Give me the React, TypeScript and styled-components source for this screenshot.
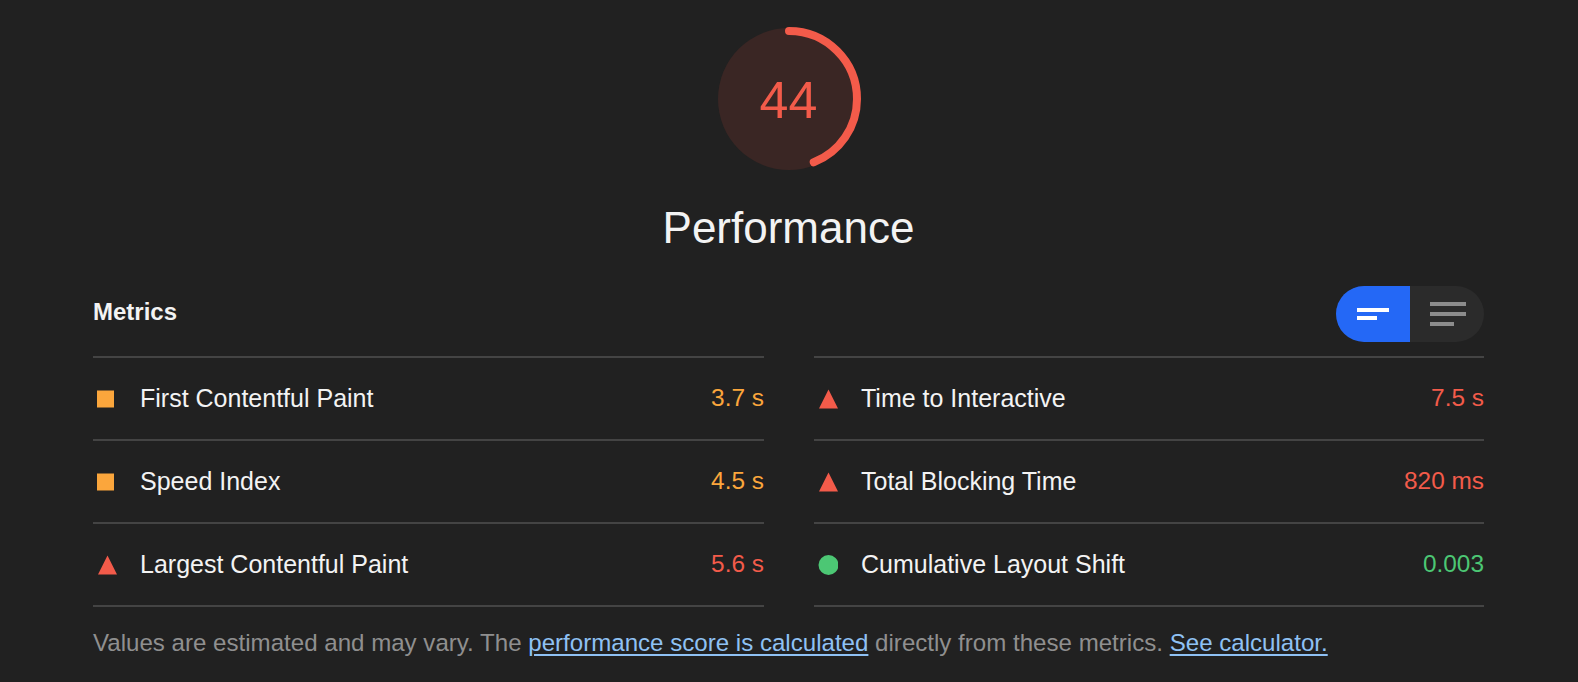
import React, { useState } from 'react';
import styled, { createGlobalStyle } from 'styled-components';

type Rating = 'pass' | 'average' | 'fail';

interface Metric {
  title: string;
  value: string;
  rating: Rating;
}

const colors: Record<Rating, string> = {
  pass: '#4cc774',
  average: '#fba63c',
  fail: '#f35b4a',
};

const leftMetrics: Metric[] = [
  { title: 'First Contentful Paint', value: '3.7 s', rating: 'average' },
  { title: 'Speed Index', value: '4.5 s', rating: 'average' },
  { title: 'Largest Contentful Paint', value: '5.6 s', rating: 'fail' },
];

const rightMetrics: Metric[] = [
  { title: 'Time to Interactive', value: '7.5 s', rating: 'fail' },
  { title: 'Total Blocking Time', value: '820 ms', rating: 'fail' },
  { title: 'Cumulative Layout Shift', value: '0.003', rating: 'pass' },
];

const GlobalStyle = createGlobalStyle`
  html, body {
    margin: 0;
    padding: 0;
    background: #212121;
  }
  body {
    font-family: "Liberation Sans", Arial, Helvetica, sans-serif;
    color: #f3f3f3;
  }
`;

const Page = styled.div`
  width: 1391px;
  margin-left: 93px;
  padding-top: 25px;
  box-sizing: border-box;
`;

const GaugeWrap = styled.div`
  display: flex;
  flex-direction: column;
  align-items: center;
`;

const GaugeBox = styled.div`
  position: relative;
  width: 148px;
  height: 148px;
`;

const GaugeScore = styled.div`
  position: absolute;
  inset: 0;
  display: flex;
  align-items: center;
  justify-content: center;
  font-size: 52px;
  color: #f35b4a;
  padding-top: 2px;
`;

const GaugeLabel = styled.div`
  margin-top: 29px;
  font-size: 44px;
  line-height: 52px;
  color: #f3f3f3;
`;

const Header = styled.div`
  display: flex;
  align-items: center;
  justify-content: space-between;
  margin-top: 32px;
  height: 56px;
  margin-bottom: 14px;
`;

const HeaderTitle = styled.h2`
  margin: 0;
  font-size: 24px;
  font-weight: bold;
  color: #f3f3f3;
  padding-bottom: 4px;
`;

const Toggle = styled.div`
  display: flex;
  width: 148px;
  height: 56px;
  border-radius: 28px;
  overflow: hidden;
  background: #2b2b2b;
`;

const ToggleButton = styled.button<{ $active: boolean }>`
  flex: 1;
  border: none;
  padding: 0;
  margin: 0;
  display: flex;
  align-items: center;
  justify-content: center;
  cursor: pointer;
  background: ${(p) => (p.$active ? '#2468f6' : 'transparent')};
`;

const Grid = styled.div`
  display: grid;
  grid-template-columns: 671px 670px;
  column-gap: 50px;
`;

const Column = styled.div`
  display: flex;
  flex-direction: column;
  border-bottom: 2px solid #444444;
`;

const Row = styled.div`
  display: flex;
  align-items: center;
  height: 81px;
  border-top: 2px solid #444444;
`;

const IconCell = styled.div`
  width: 47px;
  display: flex;
  align-items: center;
  padding-left: 3px;
  box-sizing: border-box;
`;

const Title = styled.div`
  flex: 1;
  font-size: 25px;
  color: #f3f3f3;
  padding-bottom: 1px;
`;

const Value = styled.div<{ $rating: Rating }>`
  font-size: 24.4px;
  color: ${(p) => colors[p.$rating]};
  padding-bottom: 1px;
`;

const Disclaimer = styled.p`
  margin: 22px 0 0;
  font-size: 24.1px;
  line-height: 28px;
  color: #8f8f8f;
`;

const Link = styled.a`
  color: #8fc1f4;
  text-decoration: underline;
  text-underline-offset: 3px;
`;

const RatingIcon: React.FC<{ rating: Rating }> = ({ rating }) => {
  const c = colors[rating];
  if (rating === 'average') {
    return (
      <svg width="21" height="20" viewBox="0 0 21 20">
        <rect x="1" y="1.5" width="17" height="17" fill={c} />
      </svg>
    );
  }
  if (rating === 'fail') {
    return (
      <svg width="21" height="20" viewBox="0 0 21 20">
        <polygon points="11.5,0.5 21,19.5 2,19.5" fill={c} />
      </svg>
    );
  }
  return (
    <svg width="21" height="20" viewBox="0 0 21 20">
      <circle cx="11.5" cy="10" r="10" fill={c} />
    </svg>
  );
};

const MetricList: React.FC<{ items: Metric[] }> = ({ items }) => (
  <Column>
    {items.map((m) => (
      <Row key={m.title}>
        <IconCell>
          <RatingIcon rating={m.rating} />
        </IconCell>
        <Title>{m.title}</Title>
        <Value $rating={m.rating}>{m.value}</Value>
      </Row>
    ))}
  </Column>
);

const Gauge: React.FC<{ score: number }> = ({ score }) => {
  const r = 68;
  const circ = 2 * Math.PI * r;
  const dash = (score / 100) * circ;
  return (
    <GaugeBox>
      <svg width="148" height="148" viewBox="0 0 148 148">
        <circle cx="74" cy="74" r="71" fill="#3a2624" />
        <circle
          cx="74"
          cy="74"
          r={r}
          fill="none"
          stroke="#f35b4a"
          strokeWidth="8"
          strokeLinecap="round"
          strokeDasharray={`${dash} ${circ}`}
          transform="rotate(-90 74 74)"
        />
      </svg>
      <GaugeScore>{score}</GaugeScore>
    </GaugeBox>
  );
};

export default function App() {
  const [view, setView] = useState<'summary' | 'full'>('summary');
  const activeBar = '#ffffff';
  const idleBar = '#8c8c8c';

  return (
    <>
      <GlobalStyle />
      <Page>
        <GaugeWrap>
          <Gauge score={44} />
          <GaugeLabel>Performance</GaugeLabel>
        </GaugeWrap>

        <Header>
          <HeaderTitle>Metrics</HeaderTitle>
          <Toggle>
            <ToggleButton $active={view === 'summary'} onClick={() => setView('summary')}>
              <svg width="32" height="12" viewBox="0 0 32 12">
                <rect x="0" y="0" width="32" height="4" fill={view === 'summary' ? activeBar : idleBar} />
                <rect x="0" y="8" width="20" height="4" fill={view === 'summary' ? activeBar : idleBar} />
              </svg>
            </ToggleButton>
            <ToggleButton $active={view === 'full'} onClick={() => setView('full')}>
              <svg width="36" height="24" viewBox="0 0 36 24" style={{ marginLeft: 2 }}>
                <rect x="0" y="0" width="36" height="4" fill={view === 'full' ? activeBar : idleBar} />
                <rect x="0" y="10" width="36" height="4" fill={view === 'full' ? activeBar : idleBar} />
                <rect x="0" y="20" width="24" height="4" fill={view === 'full' ? activeBar : idleBar} />
              </svg>
            </ToggleButton>
          </Toggle>
        </Header>

        <Grid>
          <MetricList items={leftMetrics} />
          <MetricList items={rightMetrics} />
        </Grid>

        <Disclaimer>
          Values are estimated and may vary. The{' '}
          <Link href="#">performance score is calculated</Link> directly from these metrics.{' '}
          <Link href="#">See calculator.</Link>
        </Disclaimer>
      </Page>
    </>
  );
}
